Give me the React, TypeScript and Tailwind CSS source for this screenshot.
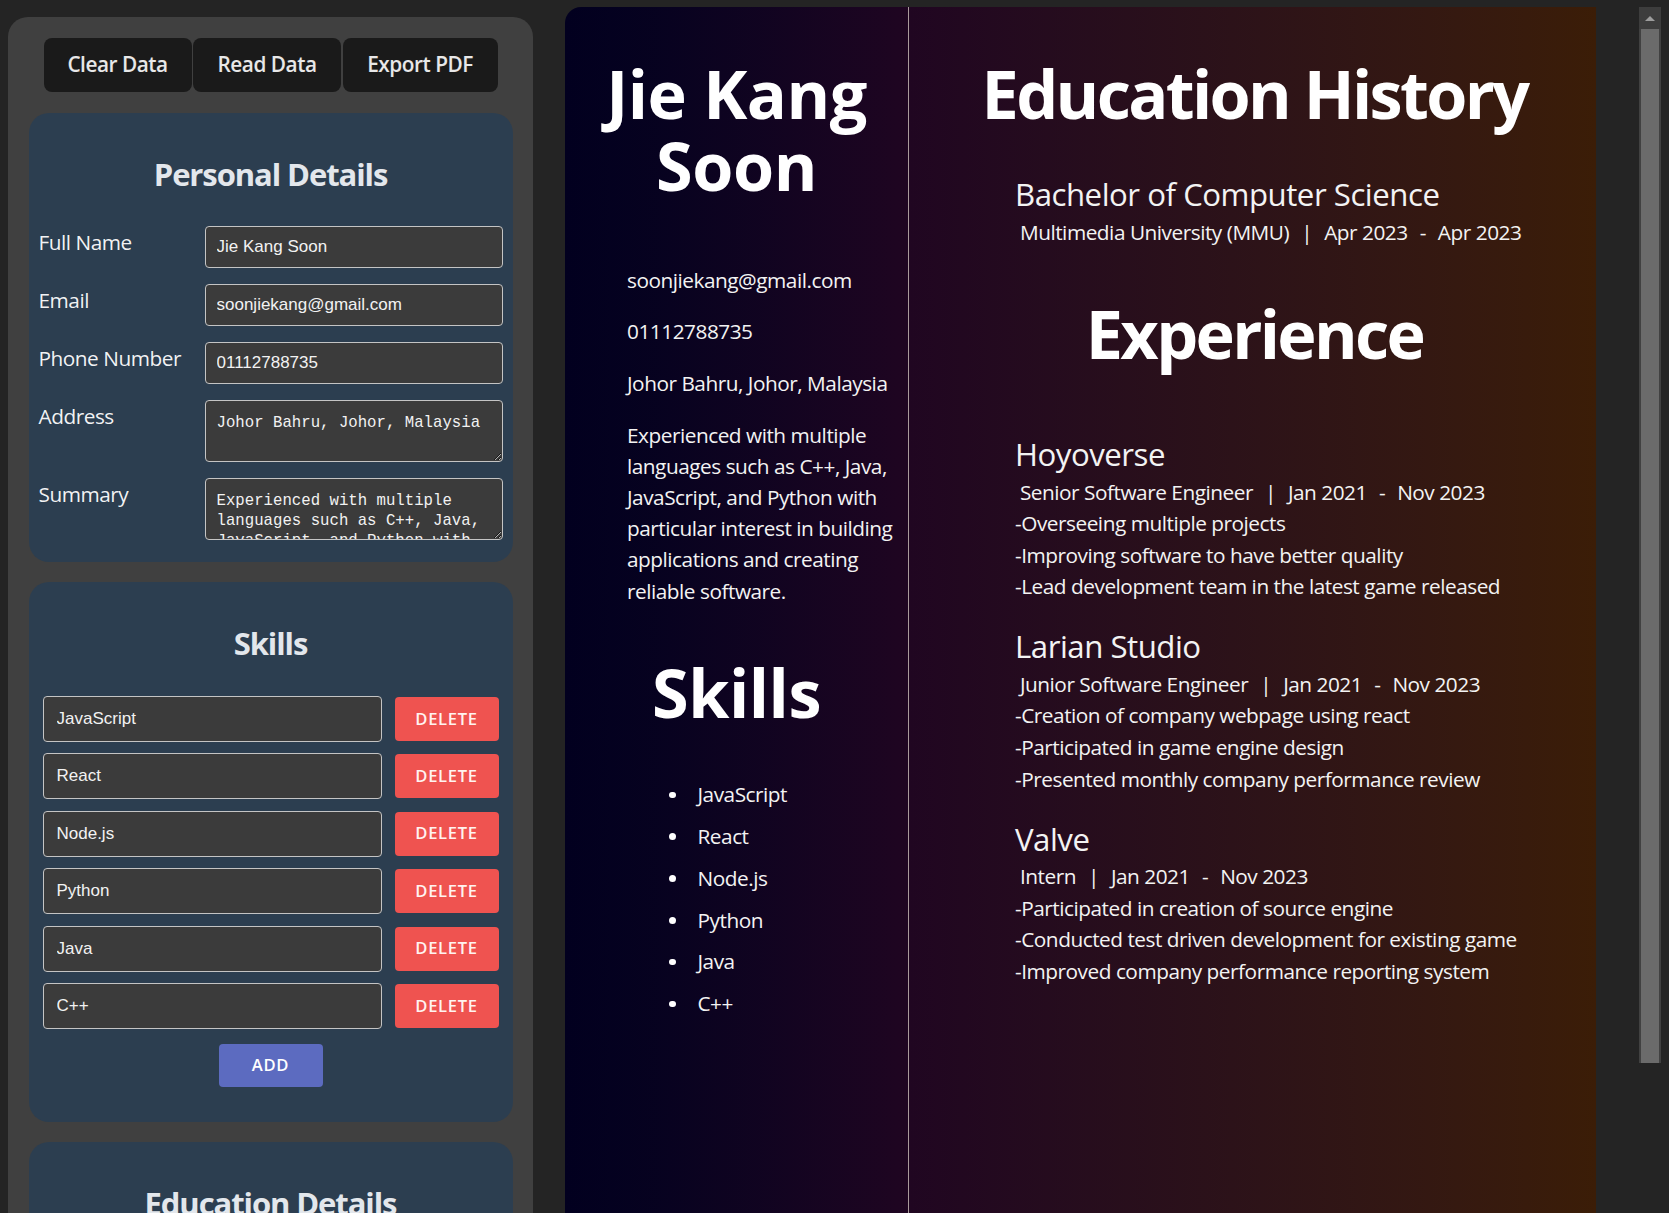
import type { ReactNode } from "react"

const personal = [
    { label: "Full Name", value: "Jie Kang Soon" },
    { label: "Email", value: "soonjiekang@gmail.com" },
    { label: "Phone Number", value: "01112788735" },
]

const skills = ["JavaScript", "React", "Node.js", "Python", "Java", "C++"]

const summaryLines = [
    "Experienced with multiple",
    "languages such as C++, Java,",
    "JavaScript, and Python with",
    "particular interest in building",
    "applications and creating",
    "reliable software.",
]

const jobs = [
    {
        company: "Hoyoverse",
        role: "Senior Software Engineer",
        points: [
            "-Overseeing multiple projects",
            "-Improving software to have better quality",
            "-Lead development team in the latest game released",
        ],
    },
    {
        company: "Larian Studio",
        role: "Junior Software Engineer",
        points: [
            "-Creation of company webpage using react",
            "-Participated in game engine design",
            "-Presented monthly company performance review",
        ],
    },
    {
        company: "Valve",
        role: "Intern",
        points: [
            "-Participated in creation of source engine",
            "-Conducted test driven development for existing game",
            "-Improved company performance reporting system",
        ],
    },
]

function CardTitle({ children }: { children: string }) {
    return (
        <h2 className="text-center text-[31px] font-bold leading-[42px] tracking-[-0.035em] text-[#e3e7ec]">
            {children}
        </h2>
    )
}

// " Role  |  From  -  To" line used in education and experience
function Period({ lead, from, to }: { lead: ReactNode; from: string; to: string }) {
    return (
        <div className="flex whitespace-pre">
            <span>{" " + lead}</span>
            <span className="px-[12px]">|</span>
            <span>{from}</span>
            <span className="px-[12px]">-</span>
            <span>{to}</span>
        </div>
    )
}

function Editor() {
    return (
        <div className="w-[525px] shrink-0 rounded-[20px] bg-[#404040] p-[20.5px]">
            <div className="flex justify-center gap-[1.5px]">
                <button className="h-[54px] w-[148px] rounded-[8px] bg-[#1a1a1a] text-[20.8px] font-semibold text-white/90">Clear Data</button>
                <button className="h-[54px] w-[148px] rounded-[8px] bg-[#1a1a1a] text-[20.8px] font-semibold text-white/90">Read Data</button>
                <button className="h-[54px] w-[155px] rounded-[8px] bg-[#1a1a1a] text-[20.8px] font-semibold text-white/90">Export PDF</button>
            </div>

            <div className="mt-[21px] flex flex-col gap-[20.5px]">
                <section className="rounded-[20px] bg-[#2c3e50] px-[10px] pb-[22px] pt-[40px]">
                    <CardTitle>Personal Details</CardTitle>
                    <div className="mt-[31px] flex flex-col gap-[16px]">
                        {personal.map((p) => (
                            <div key={p.label} className="flex items-start">
                                <label className="w-[166px] pt-[1.5px] text-[20.8px] leading-[31px] text-white/95">{p.label}</label>
                                <input
                                    readOnly
                                    value={p.value}
                                    className="h-[42px] flex-1 rounded-[4px] border border-[#c4c4c4] bg-[#3b3b3b] px-[11px] font-['Liberation_Sans',sans-serif] text-[17px] tracking-normal text-[#f2f2f2] outline-none"
                                />
                            </div>
                        ))}
                        <div className="flex items-start">
                            <label className="w-[166px] pt-[1.5px] text-[20.8px] leading-[31px] text-white/95">Address</label>
                            <textarea
                                readOnly
                                value="Johor Bahru, Johor, Malaysia"
                                className="h-[62px] flex-1 overflow-hidden rounded-[4px] border border-[#c4c4c4] bg-[#3b3b3b] px-[11px] pt-[12px] font-['Liberation_Mono',monospace] text-[15.7px] leading-[20px] tracking-normal text-[#f2f2f2] outline-none"
                            />
                        </div>
                        <div className="flex items-start">
                            <label className="w-[166px] pt-[1.5px] text-[20.8px] leading-[31px] text-white/95">Summary</label>
                            <textarea
                                readOnly
                                value="Experienced with multiple languages such as C++, Java, JavaScript, and Python with particular interest in building applications and creating reliable software."
                                className="h-[62px] flex-1 overflow-hidden rounded-[4px] border border-[#c4c4c4] bg-[#3b3b3b] px-[11px] pt-[12px] font-['Liberation_Mono',monospace] text-[15.7px] leading-[20px] tracking-normal text-[#f2f2f2] outline-none"
                            />
                        </div>
                    </div>
                </section>

                <section className="rounded-[20px] bg-[#2c3e50] px-[14px] pb-[35px] pt-[40px]">
                    <CardTitle>Skills</CardTitle>
                    <div className="mt-[32px] flex flex-col gap-[11.4px]">
                        {skills.map((s) => (
                            <div key={s} className="flex items-center gap-[13px]">
                                <input
                                    readOnly
                                    value={s}
                                    className="h-[46px] flex-1 rounded-[4px] border border-[#c4c4c4] bg-[#3b3b3b] px-[13px] font-['Liberation_Sans',sans-serif] text-[17px] tracking-normal text-[#f2f2f2] outline-none"
                                />
                                <button className="h-[44px] w-[104px] rounded-[4px] bg-[#ef5350] text-[16.6px] font-semibold tracking-[0.04em] text-[#fff3f0]">
                                    DELETE
                                </button>
                            </div>
                        ))}
                    </div>
                    <div className="mt-[15px] flex justify-center">
                        <button className="h-[43px] w-[104px] rounded-[4px] bg-[#5c6bc0] text-[16.6px] font-semibold tracking-[0.04em] text-white">ADD</button>
                    </div>
                </section>

                <section className="rounded-[20px] bg-[#2c3e50] px-[10px] pb-[20px] pt-[40px]">
                    <CardTitle>Education Details</CardTitle>
                    <div className="h-[200px]" />
                </section>
            </div>
        </div>
    )
}

function Resume() {
    return (
        <div className="flex h-[1400px] w-[1031px] shrink-0 overflow-hidden rounded-tl-[16px] text-white">
            <div className="w-[344px] shrink-0 border-r border-[#a99a9c] bg-gradient-to-r from-[#02001f] to-[#1f0521] pt-[49.75px]">
                <h1 className="text-center text-[66.5px] font-bold leading-[72.5px]">
                    Jie Kang
                    <br />
                    Soon
                </h1>
                <div className="mt-[62.75px] flex flex-col gap-[20.7px] pl-[62px] text-[20.8px] leading-[31px] text-[#f3f3f3]">
                    <p>soonjiekang@gmail.com</p>
                    <p>01112788735</p>
                    <p>Johor Bahru, Johor, Malaysia</p>
                    <p className="leading-[31.2px]">
                        {summaryLines.map((l) => (
                            <span key={l} className="block">{l}</span>
                        ))}
                    </p>
                </div>
                <h1 className="mt-[49px] text-center text-[66.5px] font-bold leading-[72.5px]">Skills</h1>
                <ul className="mt-[51px] flex flex-col gap-[10.6px] text-[20.8px] leading-[31.2px] text-[#f3f3f3]">
                    {skills.map((s) => (
                        <li key={s} className="flex items-center pl-[104px]">
                            <span className="h-[6.5px] w-[6.5px] rounded-full bg-white" />
                            <span className="ml-[22px]">{s}</span>
                        </li>
                    ))}
                </ul>
            </div>

            <div className="flex-1 bg-gradient-to-r from-[#200621] to-[#3b1d07] pt-[49.5px]">
                <h1 className="pl-[4px] text-center text-[66.5px] font-bold leading-[73px] tracking-[-0.04em]">Education History</h1>
                <div className="pl-[106px] text-[#f3f3f3]">
                    <div className="mt-[45.5px] text-[31.2px] leading-[38px]">Bachelor of Computer Science</div>
                    <div className="mt-[3.5px] text-[20.8px] leading-[31px]">
                        <Period lead="Multimedia University (MMU)" from="Apr 2023" to="Apr 2023" />
                    </div>
                </div>
                <h1 className="mt-[49px] pl-[4px] text-center text-[66.5px] font-bold leading-[73px] tracking-[-0.04em]">Experience</h1>
                <div className="mt-[65.5px] flex flex-col gap-[24.5px] pl-[106px] text-[#f3f3f3]">
                    {jobs.map((j) => (
                        <div key={j.company}>
                            <div className="text-[31.2px] leading-[38px]">{j.company}</div>
                            <div className="mt-[3.5px] text-[20.8px] leading-[31.6px]">
                                <Period lead={j.role} from="Jan 2021" to="Nov 2023" />
                                {j.points.map((p) => (
                                    <div key={p}>{p}</div>
                                ))}
                            </div>
                        </div>
                    ))}
                </div>
            </div>
        </div>
    )
}

function Scrollbar() {
    return (
        <div className="mt-[7px] flex w-[22px] shrink-0 flex-col bg-[#414141]">
            <div className="flex h-[22px] items-center justify-center bg-[#3d3d3d]">
                <div className="h-0 w-0 border-x-[5px] border-b-[5px] border-x-transparent border-b-[#9d9d9d]" />
            </div>
            <div className="mx-[2px] h-[1034px] bg-[#6b6b6b]" />
        </div>
    )
}

export default function App() {
    return (
        <div className="flex h-screen w-full overflow-hidden bg-[#242424] pl-2 font-['Open_Sans',sans-serif] tracking-[-0.03em]">
            <div className="pt-[17px]">
                <Editor />
            </div>
            <div className="ml-[32px] mt-[7px]">
                <Resume />
            </div>
            <div className="ml-[43px]">
                <Scrollbar />
            </div>
        </div>
    )
}
